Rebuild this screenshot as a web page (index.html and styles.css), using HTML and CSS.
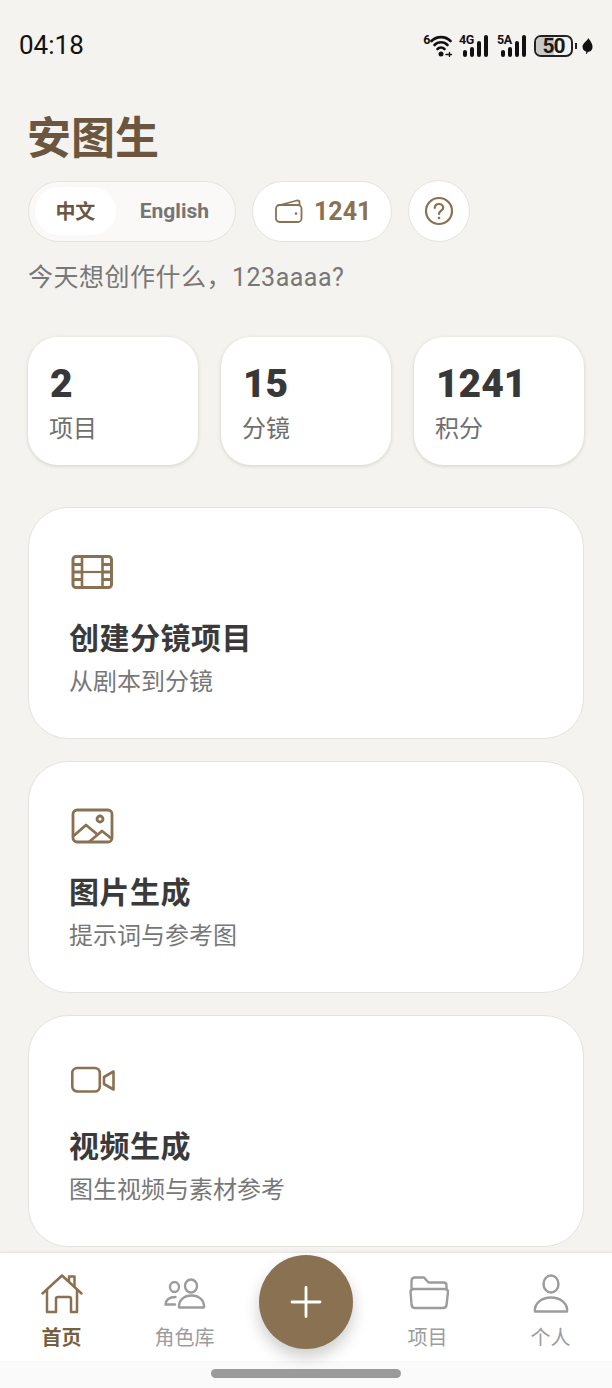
FILE: index.html
```html
<!DOCTYPE html>
<html lang="zh-CN">
<head>
    <meta charset="UTF-8">
    <title>安图生</title>
    <link rel="stylesheet" href="styles.css">
</head>
<body>
    <div class="phone">
        <!-- Status bar -->
        <div class="status-bar">
            <span class="clock">04:18</span>
            <div class="status-icons">
                <span class="net wifi">
                    <span class="net-label">6</span>
                    <svg width="22" height="22" viewBox="0 0 22 22" fill="none" stroke="#111" stroke-width="2.600" stroke-linecap="round">
                        <path d="M1.500 6C6.500 .8 15.500 .8 20.500 6"/>
                        <path d="M4.500 10C8 6.300 14 6.300 17.500 10"/>
                        <path d="M7.500 14C9.500 12 12.500 12 14.500 14"/>
                        <circle cx="11" cy="19" r="2.500" fill="#111" stroke="none"/>
                        <path d="M16 19.500h5.500M19.500 17.500v4" stroke-width="1.300"/>
                    </svg>
                </span>
                <span class="net sim">
                    <span class="net-label">4G</span>
                    <svg width="25" height="22" viewBox="0 0 25 22" fill="#111">
                        <rect x="0" y="15" width="4" height="7" rx="2"/>
                        <rect x="7" y="12" width="4" height="10" rx="2"/>
                        <rect x="14" y="6" width="4" height="16" rx="2"/>
                        <rect x="21" y="0" width="4" height="22" rx="2"/>
                    </svg>
                </span>
                <span class="net sim">
                    <span class="net-label">5A</span>
                    <svg width="25" height="22" viewBox="0 0 25 22" fill="#111">
                        <rect x="0" y="15" width="4" height="7" rx="2"/>
                        <rect x="7" y="12" width="4" height="10" rx="2"/>
                        <rect x="14" y="6" width="4" height="16" rx="2"/>
                        <rect x="21" y="0" width="4" height="22" rx="2"/>
                    </svg>
                </span>
                <span class="battery"><span class="battery-level"></span><span class="battery-num">50</span></span>
                <span class="battery-tip"></span>
                <svg class="leaf" width="11" height="16" viewBox="0 0 11 16" fill="#111">
                    <path d="M6.500 0C7.500 2.500 10.500 4.800 10.500 8.800C10.500 12 8.500 14 5.800 14L4.800 16L3.800 15.500L4.500 13.800C2 13.200 .5 11.200 .5 8.800C.5 5.200 5 3.500 6.500 0Z"/>
                </svg>
            </div>
        </div>

        <div class="content">
            <h1 class="brand">安图生</h1>

            <div class="toolbar">
                <div class="lang-switch">
                    <span class="lang lang-active">中文</span>
                    <span class="lang">English</span>
                </div>
                <div class="wallet">
                    <svg width="28" height="24" viewBox="0 0 28 24" fill="none" stroke="#8a7152" stroke-width="1.800" stroke-linejoin="round">
                        <path d="M3 6.500L22 1.500C23.500 1.200 24.500 2 24.500 3.500V6"/>
                        <rect x="1" y="6" width="25.500" height="17" rx="3.500"/>
                        <circle cx="21" cy="14.500" r="1.300" fill="#8a7152" stroke="none"/>
                    </svg>
                    <span class="wallet-num">1241</span>
                </div>
                <div class="help">
                    <svg width="30" height="30" viewBox="0 0 30 30" fill="none" stroke="#8a7152" stroke-width="2.200" stroke-linecap="round">
                        <circle cx="15" cy="15" r="13"/>
                        <path d="M10.800 12C10.800 9.500 12.700 8 15 8C17.400 8 19.200 9.600 19.200 11.700C19.200 14.500 15 14.800 15 18"/>
                        <circle cx="15" cy="22" r="1.300" fill="#8a7152" stroke="none"/>
                    </svg>
                </div>
            </div>

            <p class="greeting">今天想创作什么，123aaaa?</p>

            <div class="stats">
                <div class="stat-card">
                    <div class="stat-num">2</div>
                    <div class="stat-label">项目</div>
                </div>
                <div class="stat-card">
                    <div class="stat-num">15</div>
                    <div class="stat-label">分镜</div>
                </div>
                <div class="stat-card">
                    <div class="stat-num">1241</div>
                    <div class="stat-label">积分</div>
                </div>
            </div>

            <div class="action-card">
                <svg class="action-icon" width="44" height="36" viewBox="0 0 44 36" fill="none" stroke="#8a7152" stroke-linejoin="round">
                    <rect x="2" y="2.500" width="38.500" height="31" rx="3" stroke-width="3"/>
                    <path d="M11 2.500V33.500M31.500 2.500V33.500" stroke-width="2.600"/>
                    <path d="M11 18H31.500" stroke-width="2.200"/>
                    <path d="M2 10.500H11M2 18H11M2 25.500H11M31.500 10.500H40.500M31.500 18H40.500M31.500 25.500H40.500" stroke-width="3"/>
                </svg>
                <div class="action-title">创建分镜项目</div>
                <div class="action-sub">从剧本到分镜</div>
            </div>

            <div class="action-card">
                <svg class="action-icon" width="44" height="36" viewBox="0 0 44 36" fill="none" stroke="#8a7152" stroke-width="2.800" stroke-linejoin="round">
                    <rect x="2" y="2" width="39" height="32" rx="4"/>
                    <circle cx="29" cy="11" r="3"/>
                    <path d="M2.500 28L15 17L27 27"/>
                    <path d="M18 34L31 23L41 31"/>
                </svg>
                <div class="action-title">图片生成</div>
                <div class="action-sub">提示词与参考图</div>
            </div>

            <div class="action-card">
                <svg class="action-icon" width="44" height="36" viewBox="0 0 44 36" fill="none" stroke="#8a7152" stroke-width="2.600" stroke-linejoin="round">
                    <rect x="1.300" y="6" width="27.500" height="23.500" rx="5"/>
                    <path d="M42.500 9.500L33 15V22L42.500 27.500Z"/>
                </svg>
                <div class="action-title">视频生成</div>
                <div class="action-sub">图生视频与素材参考</div>
            </div>
        </div>

        <!-- Bottom navigation -->
        <div class="tab-bar">
            <div class="tab tab-active">
                <svg width="42" height="40" viewBox="0 0 42 40" fill="none" stroke="#8a7152" stroke-width="2.500" stroke-linecap="round" stroke-linejoin="round">
                    <path d="M1.500 19.500L21 1.500L40.500 19.500"/>
                    <path d="M6 16V38H15V25C15 23.800 16 23 17 23H28C29 23 30 23.800 30 25V38H36V16"/>
                    <path d="M28 7V2.500H33.500V12.500"/>
                </svg>
                <span>首页</span>
            </div>
            <div class="tab">
                <svg width="42" height="40" viewBox="0 0 42 40" fill="none" stroke="#9c9c9c" stroke-width="2.400" stroke-linecap="round" stroke-linejoin="round">
                    <ellipse cx="10.500" cy="13" rx="4.500" ry="5"/>
                    <ellipse cx="27" cy="12" rx="6" ry="6.500"/>
                    <path d="M11.500 23C6 23 2 25.500 1.500 30.500H11"/>
                    <path d="M15 33.500H40C40.500 26 34.500 21.500 27.500 21.500C20.500 21.500 14.500 26 15 33.500Z"/>
                </svg>
                <span>角色库</span>
            </div>
            <div class="tab-spacer"></div>
            <div class="tab">
                <svg width="42" height="40" viewBox="0 0 42 40" fill="none" stroke="#9c9c9c" stroke-width="2.400" stroke-linecap="round" stroke-linejoin="round">
                    <path d="M4.500 14V7C4.500 5 6 3.500 8 3.500H17L21.500 8.500H36.500C38.500 8.500 39.500 10 39.500 11.500V15"/>
                    <path d="M3.500 18C3.500 16 5 15 7 15H37.500C39.500 15 41 16 41 18L39.500 31C39.300 32.800 38 34 36 34H8C6 34 4.800 32.800 4.600 31Z"/>
                </svg>
                <span>项目</span>
            </div>
            <div class="tab">
                <svg width="42" height="40" viewBox="0 0 42 40" fill="none" stroke="#9c9c9c" stroke-width="2.400" stroke-linecap="round" stroke-linejoin="round">
                    <ellipse cx="21" cy="10" rx="7.500" ry="8.500"/>
                    <path d="M5 37.500C4 29 12 23.500 21 23.500C30 23.500 38 29 37 37.500Z"/>
                </svg>
                <span>个人</span>
            </div>
            <button class="fab">
                <svg width="32" height="32" viewBox="0 0 32 32" stroke="#fff" stroke-width="2.800" stroke-linecap="round">
                    <path d="M16 1.500V30.500M2 16H30"/>
                </svg>
            </button>
        </div>

        <div class="home-area"><span class="home-bar"></span></div>
    </div>
</body>
</html>
```

FILE: styles.css
```css
* {
    box-sizing: border-box;
}
body {
    margin: 0;
    background: #f4f3ef;
    font-family: "Noto Sans CJK SC", "Noto Sans", sans-serif;
}
.phone {
    width: 612px;
    height: 1388px;
    display: flex;
    flex-direction: column;
    overflow: hidden;
}

/* status bar */
.status-bar {
    height: 88px;
    flex: none;
    padding: 30px 19px 0 19px;
    display: flex;
    justify-content: space-between;
    align-items: flex-start;
}
.clock {
    font-family: Roboto, sans-serif;
    font-size: 26px;
    line-height: 30px;
    color: #111;
}
.status-icons {
    display: flex;
    align-items: center;
    height: 22px;
    margin-top: 5px;
}
.net {
    display: flex;
    align-items: flex-end;
    margin-right: 9px;
}
.net-label {
    font-family: Roboto, sans-serif;
    font-size: 12.5px;
    font-weight: 700;
    letter-spacing: -0.5px;
    line-height: 10px;
    color: #111;
    align-self: flex-start;
}
.wifi {
    margin-right: 7px;
}
.sim .net-label {
    width: 13px;
    margin-right: -9px;
    margin-left: 0;
}
.sim {
    margin-right: 9px;
}
.sim + .battery {
    margin-left: -1px;
}
.battery {
    width: 39px;
    height: 22px;
    border: 2px solid #222;
    border-radius: 7px;
    position: relative;
    overflow: hidden;
    display: flex;
    align-items: center;
    justify-content: center;
}
.battery-level {
    position: absolute;
    left: 0;
    top: 0;
    bottom: 0;
    width: 50%;
    background: #c8c8c6;
}
.battery-num {
    position: relative;
    font-family: Roboto, sans-serif;
    font-size: 21px;
    font-weight: 700;
    letter-spacing: -1px;
    color: #1a1a1a;
}
.battery-tip {
    width: 2px;
    height: 6px;
    margin: 0 5px 0 2px;
    background: #222;
}

/* main */
.content {
    flex: 1;
    min-height: 0;
    padding: 0 28px;
    overflow: hidden;
}
.brand {
    margin: 20px 0 0 -1px;
    font-size: 44px;
    line-height: 54px;
    font-weight: 700;
    color: #6b563f;
}
.toolbar {
    display: flex;
    align-items: center;
    margin-top: 18px;
    gap: 16px;
}
.lang-switch {
    width: 208px;
    height: 61px;
    padding: 6px;
    display: flex;
    align-items: center;
    background: #faf9f7;
    border: 1px solid #e5e3de;
    border-radius: 31px;
}
.lang {
    font-size: 21px;
    font-weight: 700;
    color: #757575;
    padding: 0 20px 0 24px;
    line-height: 48px;
    font-family: Roboto, "Noto Sans CJK SC", sans-serif;
}
.lang-active {
    width: 81px;
    padding: 0;
    text-align: center;
    font-size: 20px;
    background: #fff;
    border-radius: 24px;
    color: #6b563f;
    font-family: "Noto Sans CJK SC", sans-serif;
}
.wallet {
    width: 140px;
    height: 61px;
    display: flex;
    align-items: center;
    padding-left: 22px;
    gap: 11px;
    background: #fff;
    border: 1px solid #e5e3de;
    border-radius: 31px;
}
.wallet-num {
    font-family: Roboto, sans-serif;
    font-size: 25px;
    font-weight: 700;
    color: #8a7152;
}
.help {
    width: 62px;
    height: 62px;
    display: flex;
    align-items: center;
    justify-content: center;
    background: #fff;
    border: 1px solid #e5e3de;
    border-radius: 50%;
}
.greeting {
    margin: 18px 0 0;
    font-family: Roboto, "Noto Sans CJK SC", sans-serif;
    font-size: 25px;
    letter-spacing: 0.5px;
    line-height: 36px;
    color: #777;
}

/* stats */
.stats {
    display: flex;
    gap: 23px;
    margin-top: 41px;
}
.stat-card {
    flex: 1;
    height: 128px;
    padding: 25px 22px 0;
    background: #fff;
    border-radius: 30px;
    box-shadow: 0 1px 3px 1px #dfdcd6;
}
.stat-num {
    font-family: Roboto, sans-serif;
    font-size: 39px;
    line-height: 44px;
    font-weight: 900;
    color: #383838;
}
.stat-label {
    font-size: 24px;
    line-height: 36px;
    color: #6f6f6f;
    margin-top: 3px;
    margin-left: -1px;
}

/* action cards */
.action-card {
    height: 232px;
    margin-top: 22px;
    padding: 46px 40px 0;
    background: #fff;
    border: 1px solid #e5e3de;
    border-radius: 40px;
}
.stats + .action-card {
    margin-top: 42px;
}
.action-icon {
    display: block;
    margin-left: 2px;
}
.action-title {
    margin-top: 24px;
    font-size: 30px;
    letter-spacing: 0.5px;
    line-height: 44px;
    font-weight: 700;
    color: #3a3a3a;
}
.action-sub {
    margin-top: 4px;
    font-size: 24px;
    line-height: 36px;
    color: #777;
}

/* tab bar */
.tab-bar {
    flex: none;
    height: 108px;
    position: relative;
    display: flex;
    background: #fff;
    box-shadow: 0 -1px 2px #e5e3de;
}
.tab {
    flex: 1;
    display: flex;
    flex-direction: column;
    align-items: center;
    padding-top: 21px;
    font-size: 20px;
    line-height: 30px;
    color: #9c9c9c;
}
.tab span {
    margin-top: 8px;
}
.tab-active {
    color: #75603f;
    font-weight: 700;
}
.tab-spacer {
    width: 120px;
    flex: none;
}
.fab {
    position: absolute;
    left: 259px;
    top: 2px;
    width: 94px;
    height: 94px;
    padding: 0;
    border: none;
    border-radius: 50%;
    background: #8a7152;
    display: flex;
    align-items: center;
    justify-content: center;
    box-shadow: 0 8px 16px rgba(0, 0, 0, 0.2);
}
.home-area {
    flex: none;
    height: 27px;
    background: #fafafa;
    display: flex;
    justify-content: center;
    padding-top: 8px;
}
.home-bar {
    width: 190px;
    height: 9px;
    border-radius: 5px;
    background: #9b9b9b;
}
```
